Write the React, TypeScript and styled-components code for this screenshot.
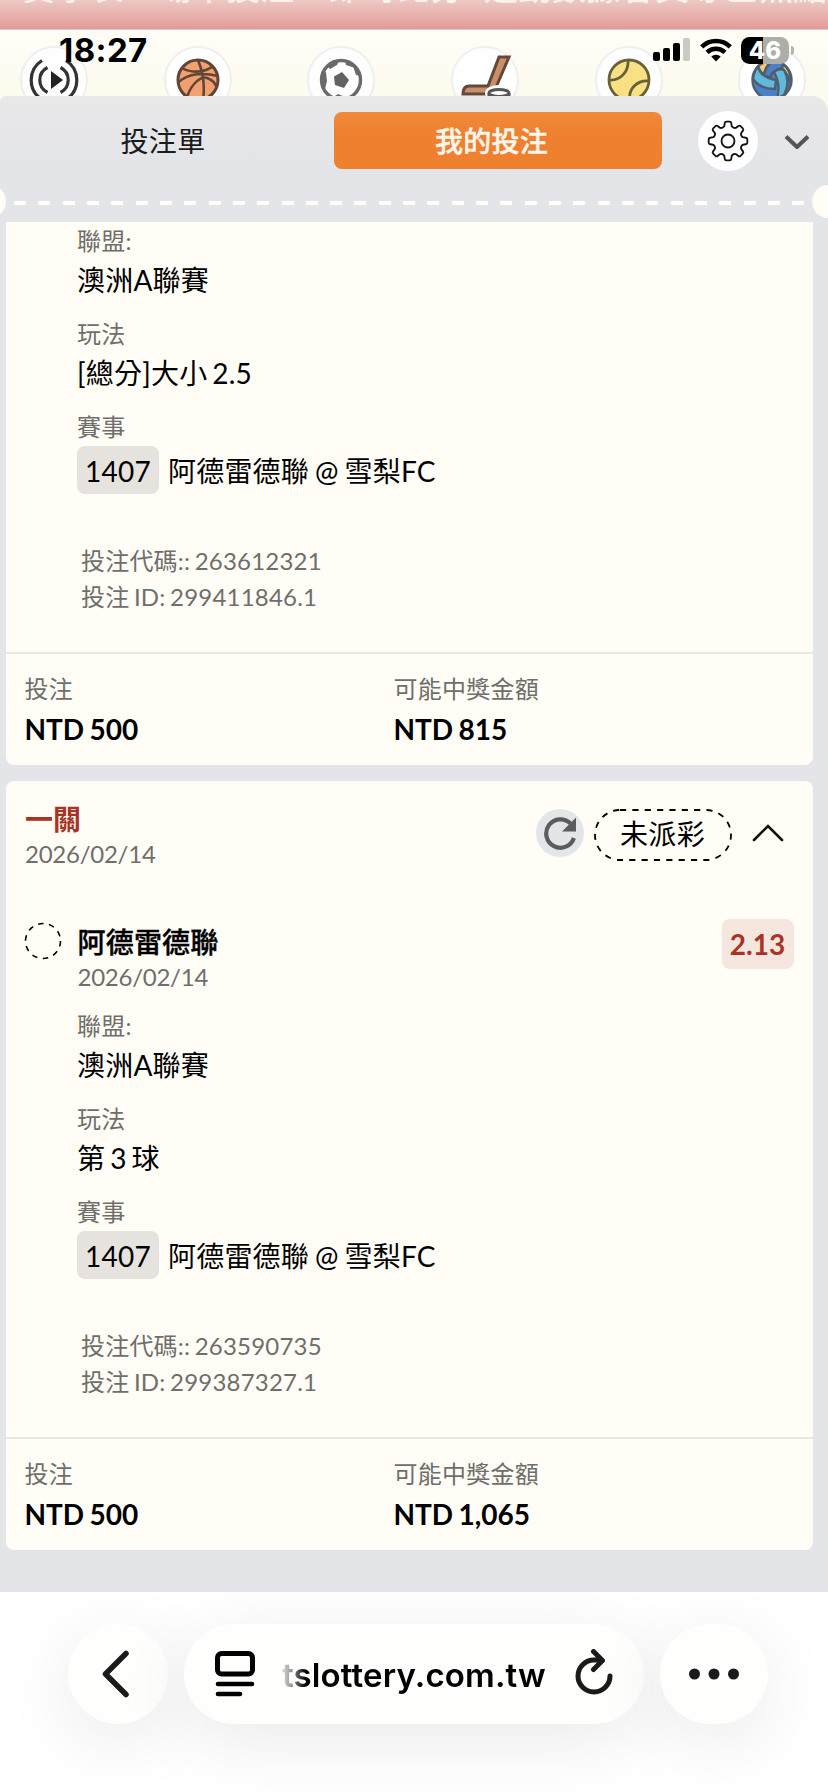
import React from "react";
import styled, { createGlobalStyle, css } from "styled-components";

const Global = createGlobalStyle`
  * { box-sizing: border-box; }
  html, body { margin: 0; padding: 0; }
  body {
    font-family: Lato, "Noto Sans CJK TC", sans-serif;
    background: #fff;
    color: #000;
  }
`;

const Screen = styled.div`
  position: relative;
  width: 828px;
  height: 1792px;
  overflow: hidden;
  display: flex;
  flex-direction: column;
`;

const NavStrip = styled.nav`
  height: 30px;
  flex: none;
  overflow: hidden;
  display: flex;
  align-items: flex-start;
  padding-left: 22px;
  background: linear-gradient(#edc9c3, #e39a97);
  border-bottom: 1px solid #eec4bd;
`;

const NavItem = styled.span<{ $w: number }>`
  width: ${(p) => p.$w}px;
  flex: none;
  margin-top: -33px;
  font-size: 34px;
  font-weight: 500;
  line-height: 40px;
  white-space: nowrap;
  color: #fdf3ea;
`;

const Sports = styled.div`
  height: 66px;
  flex: none;
  overflow: hidden;
  display: flex;
  gap: 75.7px;
  padding: 16px 0 0 20px;
  background: linear-gradient(#fffdf7, #fcfbee);
`;

const SportCircle = styled.div`
  width: 68px;
  height: 68px;
  flex: none;
  border-radius: 50%;
  border: 2px solid #f0efee;
  background: #fefefe;
  display: flex;
  align-items: center;
  justify-content: center;
`;

const StatusBar = styled.div`
  position: absolute;
  z-index: 2;
  left: 0;
  top: 30px;
  width: 828px;
  height: 40px;
  display: flex;
  align-items: center;
  justify-content: space-between;
  padding: 0 34px 0 59px;
`;

const Clock = styled.span`
  font: 700 33px/40px Inter, sans-serif;
  letter-spacing: 0.4px;
`;

const StatusIcons = styled.div`
  display: flex;
  align-items: center;
`;

const Bars = styled.svg`
  margin-right: 10px;
`;
const Wifi = styled.svg`
  margin-right: 9px;
`;

const Battery = styled.div`
  width: 48px;
  height: 27px;
  border-radius: 8.5px;
  background: linear-gradient(90deg, #000 22px, #adada9 22px);
  color: #fff;
  font: 800 24px/28px Inter, sans-serif;
  text-align: center;
`;
const BatteryTip = styled.span`
  width: 3px;
  height: 9px;
  margin-left: 2px;
  border-radius: 0 4px 4px 0;
  background: #b4b4b0;
`;

const Sheet = styled.main`
  height: 1496px;
  flex: none;
  display: flex;
  flex-direction: column;
  background: linear-gradient(#e8e8e9, #e4e5e8 70px);
  border-radius: 6px 16px 0 0;
`;

const SheetBack = styled.div`
  flex: none;
  height: 1496px;
  background: #fcfbee;
`;

const Tabs = styled.div`
  height: 88px;
  flex: none;
  display: flex;
  align-items: center;
  padding-top: 1px;
`;

const Tab = styled.div<{ $active?: boolean }>`
  height: 57px;
  width: 328px;
  display: flex;
  align-items: center;
  justify-content: center;
  font-size: 28px;
  letter-spacing: 0.3px;
  padding-bottom: 2px;
  border-radius: 8px;
  color: #1b1b1b;
  ${(p) =>
    p.$active
      ? css`
          background: linear-gradient(#f08a3a, #ee8030 40%);
          color: #fff6ec;
          font-weight: 500;
          padding-right: 13px;
          -webkit-text-stroke: 0.4px #fff6ec;
        `
      : css`
          padding-right: 2px;
          margin-right: 6px;
        `}
`;

const RoundButton = styled.div<{ $size: number; $bg: string }>`
  width: ${(p) => p.$size}px;
  height: ${(p) => p.$size}px;
  flex: none;
  border-radius: 50%;
  background: ${(p) => p.$bg};
  display: flex;
  align-items: center;
  justify-content: center;
`;

const GearSlot = styled.div`
  margin: 0 26px 0 36px;
`;

const Perforation = styled.div`
  height: 38px;
  flex: none;
  display: flex;
  align-items: center;
  justify-content: space-between;
  overflow: hidden;
`;

const Notch = styled.span<{ $side: "left" | "right" }>`
  width: 33px;
  height: 33px;
  flex: none;
  border-radius: 50%;
  background: #fffdf6;
  margin-top: -3px;
  ${(p) => (p.$side === "left" ? "margin-left: -27px;" : "margin-right: -17px;")}
`;

const Dashes = styled.span`
  width: 790px;
  height: 4px;
  background: repeating-linear-gradient(90deg, #fffdf6 0 12px, transparent 12px 24.32px);
`;

const List = styled.div`
  flex: 1;
  min-height: 0;
  overflow: hidden;
  display: flex;
  flex-direction: column;
  gap: 16px;
  padding: 0 15.5px 0 6px;
`;

const Card = styled.section<{ $cut?: boolean }>`
  flex: none;
  background: #fffdf6;
  border-radius: ${(p) => (p.$cut ? "0 0 8px 8px" : "8px")};
  height: ${(p) => (p.$cut ? 543 : 769)}px;
  display: flex;
  flex-direction: column;
`;

const CardHead = styled.header`
  height: 122px;
  flex: none;
  display: flex;
  justify-content: space-between;
  padding: 20px 29px 0 19px;
`;

const HeadActions = styled.div`
  display: flex;
  align-items: center;
  height: 64px;
`;

const RoundName = styled.div`
  font-size: 28px;
  line-height: 36px;
  font-weight: 700;
  color: #a93325;
`;

const DateText = styled.div`
  font-size: 24px;
  line-height: 34px;
  letter-spacing: -0.25px;
  color: #6f6e6b;
`;

const Status = styled.div`
  position: relative;
  width: 138px;
  height: 52px;
  margin: 4px 20px 0 10px;
  padding-bottom: 4px;
  display: flex;
  align-items: center;
  justify-content: center;
  font-size: 28px;
  letter-spacing: 0.3px;
`;

const Outline = styled.svg`
  position: absolute;
  inset: 0;
`;

const Pick = styled.div`
  height: 104px;
  flex: none;
  display: flex;
  padding: 18.500px 19px 0 18px;
`;

const PickInfo = styled.div`
  flex: 1;
  padding-left: 15.500px;
`;

const Team = styled.div`
  font-size: 28px;
  line-height: 36px;
  font-weight: 500;
  letter-spacing: 0.2px;
  -webkit-text-stroke: 0.4px #000;
  padding-top: 2px;
`;

const Odds = styled.div`
  width: 72px;
  height: 50px;
  border-radius: 8px;
  margin-top: -2.500px;
  background: #f5e7df;
  color: #a93325;
  font-size: 28px;
  line-height: 51px;
  font-weight: 700;
  text-align: center;
`;

const Details = styled.div`
  padding: 3px 0 0 71px;
`;

const Label = styled.div`
  font-size: 24px;
  line-height: 32px;
  letter-spacing: 0.25px;
  color: #6f6e6b;
`;

const Value = styled.div`
  font-size: 28px;
  line-height: 46px;
  margin-bottom: 15.2px;
  letter-spacing: 0.2px;
  word-spacing: -2.4px;
  white-space: pre;
`;

const Match = styled.div`
  display: flex;
  align-items: center;
  height: 48px;
  margin-top: 3px;
  font-size: 28px;
  letter-spacing: 0.2px;
  word-spacing: -1.4px;
`;

const Code = styled.span`
  width: 82px;
  height: 48px;
  margin-right: 9px;
  border-radius: 8px;
  background: #e6e3de;
  text-align: center;
  line-height: 50px;
`;

const Ids = styled.div`
  padding: 48.500px 0 0 4px;
  font-size: 24px;
  line-height: 36.6px;
  letter-spacing: 0.2px;
  word-spacing: -1.8px;
  color: #6f6e6b;
`;

const Foot = styled.footer`
  height: 113px;
  margin-top: auto;
  border-top: 2px solid #e8e7e1;
  display: flex;
  padding: 19px 18.5px 0;
`;

const Amount = styled.div`
  width: 369px;
`;

const Money = styled.div`
  font-size: 28px;
  line-height: 44px;
  font-weight: 700;
  word-spacing: -1.4px;
  padding-top: 2px;
`;

const BrowserBar = styled.footer`
  height: 200px;
  flex: none;
  display: flex;
  gap: 16px;
  padding: 32px 60px 0 68px;
  background: #fff;
  overflow: hidden;
`;

const Pill = styled.div<{ $w: number }>`
  width: ${(p) => p.$w}px;
  height: 100px;
  flex: none;
  border-radius: 50px;
  background: #fefefd;
  box-shadow: 0 16px 72px rgba(0, 0, 0, 0.085);
  display: flex;
  align-items: center;
  justify-content: center;
`;

const BackIcon = styled.svg`
  margin-right: 4px;
`;

const Url = styled.span`
  width: 268px;
  margin: 2px 25px 0 27px;
  font: 600 33px/40px Inter, sans-serif;
  letter-spacing: 0.15px;
  white-space: nowrap;
  background: linear-gradient(90deg, #ddd 0, #999 9px, #000 24px);
  -webkit-background-clip: text;
  background-clip: text;
  color: transparent;
`;

const ReloadPage = styled.svg`
  margin-bottom: 5px;
`;

const LiveIcon = () => (
  <svg width="50" height="50" viewBox="-25 -25 50 50" fill="none" stroke="#333" strokeWidth="3.2">
    <path d="M-12 -19.5A23 23 0 0 0 -12 19.5M12 -19.5A23 23 0 0 1 12 19.5" />
    <path d="M-6.5 -12.5A14 14 0 0 0 -6.5 12.5M6.5 -12.5A14 14 0 0 1 6.5 12.5" />
    <path d="M-3 -9L9 0L-3 9Z" fill="#222" stroke="none" />
  </svg>
);

const BasketballIcon = () => (
  <svg width="44" height="44" viewBox="-22 -22 44 44" fill="none" stroke="#5f4636" strokeWidth="2.6">
    <circle r="20" fill="#f3a071" strokeWidth="3" />
    <path d="M0 -20C5 -8 7 6 5 20M-16 -12C-6 -6 8 -8 15 -14M-20 3C-10 -8 8 -7 20 -4M-11 17C-6 2 4 -4 9 -2C15 0 18 5 19 8" />
  </svg>
);

const SoccerIcon = () => (
  <svg width="44" height="44" viewBox="-22 -22 44 44">
    <circle r="19.5" fill="#fff" stroke="#6a6a6a" strokeWidth="3.4" />
    <path d="M-7 -3.500L1 -8L8 0L3 8L-6 5Z" fill="#626262" />
    <path d="M4 -20Q17 -17 20 -4L15 -5L12.500 -12.500L5 -15ZM-20 -6L-15 -8L-14 1L-16 9L-20 6ZM-14 -14L-6 -20L-2 -19L-4 -15L-11 -11ZM-9 18L-3 14L4 17L2 20L-6 20ZM20 4L16 8L13 14L16 14Z" fill="#6a6a6a" />
  </svg>
);

const HockeyIcon = () => (
  <svg width="56" height="56" viewBox="-28 -28 56 56" stroke="#63493b" strokeWidth="3">
    <path d="M14 -23H24L12 5Q8 14 0 14H-22Q-22 6 -16 6H3Z" fill="#c98f68" />
    <ellipse cx="14" cy="13" rx="14" ry="8" fill="#fff" stroke="none" />
    <path d="M4 13V20H24V13" fill="none" stroke="#555" />
    <ellipse cx="14" cy="13" rx="10" ry="3.5" fill="#fff" stroke="#555" />
  </svg>
);

const TennisIcon = () => (
  <svg width="44" height="44" viewBox="-22 -22 44 44" fill="none" stroke="#67613a" strokeWidth="2.8">
    <circle r="20" fill="#f8e083" />
    <path d="M-20 0C-9 1 0 -8 -1 -20M20 1C8 0 -1 9 1 20" />
  </svg>
);

const VolleyballIcon = () => (
  <svg width="44" height="44" viewBox="-22 -22 44 44" strokeLinejoin="round" fill="none" stroke="#4f5f6c" strokeWidth="2.4">
    <circle r="19.5" fill="#4a7fc9" />
    <path d="M-14 -13.500Q-8 -19 0 -19.500Q-7 -13 -8 -5Q-12 -8 -14 -13.500Z" fill="#f6ca73" />
    <path d="M11 -16Q20 -9 19 5Q17 -5 10 -12Z" fill="#f6ca73" />
    <path d="M-8 -5Q-6 -14 1 -19.500Q7 -19 11 -16L10 -12Q0 -10 -2 -2Z" fill="#4a7fc9" />
    <path d="M-14 -13.500Q-12 -3 4 0L3 9Q-12 9 -19 -1Q-18 -9 -14 -13.500Z" fill="#62b9de" />
    <path d="M2 -8Q7 -12 12 -10Q19 2 12 15L5 18.500Q9 4 2 -8Z" fill="#62b9de" />
  </svg>
);

const gearPath = (() => {
  const pts: string[] = [];
  const n = 8;
  for (let i = 0; i < n; i++) {
    const c = (i * 2 * Math.PI) / n - Math.PI / 2;
    const p = (r: number, o: number) =>
      `${(r * Math.cos(c + o)).toFixed(2)} ${(r * Math.sin(c + o)).toFixed(2)}`;
    pts.push(
      `${i === 0 ? "M" : "L"}${p(15.2, -0.25)}Q${p(16.2, -0.22)} ${p(18.2, -0.18)}Q${p(19.6, -0.16)} ${p(19.4, -0.08)}L${p(19.4, 0.08)}Q${p(19.6, 0.16)} ${p(18.2, 0.18)}Q${p(16.2, 0.22)} ${p(15.2, 0.25)}Q${p(13.6, 0.393)} ${p(15.2, 0.535)}`
    );
  }
  return pts.join("") + "Z";
})();

const GearIcon = () => (
  <svg width="44" height="44" viewBox="-22 -22 44 44" fill="none" stroke="#111" strokeWidth="1.8" strokeLinejoin="round">
    <path d={gearPath} />
    <circle r="6.5" />
  </svg>
);

const ReloadBet = () => (
  <svg width="34" height="34" viewBox="-17 -17 34 34">
    <path d="M13.9 5A14.2 14.2 0 1 1 10.5 -9.5" fill="none" stroke="#5b5c5e" strokeWidth="4.2" />
    <path d="M16 -15.5V-1.5H2Z" fill="#5b5c5e" />
  </svg>
);

const sports = [LiveIcon, BasketballIcon, SoccerIcon, HockeyIcon, TennisIcon, VolleyballIcon];

const nav: [string, number][] = [
  ["賽事表", 136],
  ["場中投注", 170],
  ["即時比分", 156],
  ["運動數據", 137],
  ["會員專區", 138],
  ["焦點", 68],
];

interface BetProps {
  play: string;
  code: string;
  id: string;
  win: string;
  cut?: boolean;
}

const Bet = ({ play, code, id, win, cut }: BetProps) => (
  <Card $cut={cut}>
    {!cut && (
      <>
        <CardHead>
          <div>
            <RoundName>一關</RoundName>
            <DateText>2026/02/14</DateText>
          </div>
          <HeadActions>
            <RoundButton $size={48} $bg="#e4e5e9">
              <ReloadBet />
            </RoundButton>
            <Status>
              <Outline width="138" height="52">
                <rect x="1" y="1" width="136" height="50" rx="25" fill="none" stroke="#000" strokeWidth="1.8" strokeDasharray="6.2 6.15" />
              </Outline>
              未派彩
            </Status>
            <svg width="32" height="18" viewBox="0 0 32 18" fill="none" stroke="#111" strokeWidth="2.6" strokeLinecap="round">
              <path d="M2 16L16 2L30 16" />
            </svg>
          </HeadActions>
        </CardHead>
        <Pick>
          <svg width="38" height="38" viewBox="-19 -19 38 38">
            <circle r="17.5" fill="none" stroke="#000" strokeWidth="1.6" strokeDasharray="5.5 5.5" />
          </svg>
          <PickInfo>
            <Team>阿德雷德聯</Team>
            <DateText>2026/02/14</DateText>
          </PickInfo>
          <Odds>2.13</Odds>
        </Pick>
      </>
    )}
    <Details>
      <Label>聯盟:</Label>
      <Value>澳洲A聯賽</Value>
      <Label>玩法</Label>
      <Value>{play}</Value>
      <Label>賽事</Label>
      <Match>
        <Code>1407</Code>阿德雷德聯 @ 雪梨FC
      </Match>
      <Ids>
        <div>投注代碼:: {code}</div>
        <div>投注 ID: {id}</div>
      </Ids>
    </Details>
    <Foot>
      <Amount>
        <Label>投注</Label>
        <Money>NTD 500</Money>
      </Amount>
      <Amount>
        <Label>可能中獎金額</Label>
        <Money>NTD {win}</Money>
      </Amount>
    </Foot>
  </Card>
);

export default function App() {
  return (
    <Screen>
      <Global />
      <StatusBar>
        <Clock>18:27</Clock>
        <StatusIcons>
          <Bars width="37" height="24">
            <rect x="0" y="14" width="7" height="9" rx="2" />
            <rect x="10" y="10" width="7" height="13" rx="2" />
            <rect x="20" y="5" width="7" height="18" rx="2" />
            <rect x="30" y="0" width="7" height="23" rx="2" fill="#cacac5" />
          </Bars>
          <Wifi width="32" height="24" viewBox="0 0 32 24" fill="none" stroke="#000" strokeWidth="4.6">
            <path d="M1.7 8.8A20.5 20.5 0 0 1 30.3 8.8" />
            <path d="M7 14.3A13 13 0 0 1 25 14.3" />
            <path d="M16 23.5L11.3 18.6A6.8 6.8 0 0 1 20.7 18.6Z" fill="#000" stroke="none" />
          </Wifi>
          <Battery>46</Battery>
          <BatteryTip />
        </StatusIcons>
      </StatusBar>
      <NavStrip>
        {nav.map(([t, w]) => (
          <NavItem key={t} $w={w}>
            {t}
          </NavItem>
        ))}
      </NavStrip>
      <Sports>
        {sports.map((Icon, i) => (
          <SportCircle key={i}>
            <Icon />
          </SportCircle>
        ))}
      </Sports>
      <SheetBack>
        <Sheet>
          <Tabs>
            <Tab>投注單</Tab>
            <Tab $active>我的投注</Tab>
            <GearSlot>
              <RoundButton $size={60} $bg="#fff">
                <GearIcon />
              </RoundButton>
            </GearSlot>
            <svg width="26" height="18" viewBox="0 -2 26 18" fill="none" stroke="#555" strokeWidth="4" strokeLinejoin="round">
              <path d="M2 2.5L13 13L24 2.5" />
            </svg>
          </Tabs>
          <Perforation>
            <Notch $side="left" />
            <Dashes />
            <Notch $side="right" />
          </Perforation>
          <List>
            <Bet cut play="[總分]大小 2.5" code="263612321" id="299411846.1" win="815" />
            <Bet play="第 3 球" code="263590735" id="299387327.1" win="1,065" />
          </List>
        </Sheet>
      </SheetBack>
      <BrowserBar>
        <Pill $w={100}>
          <BackIcon width="28" height="48" viewBox="0 0 28 48" fill="none" stroke="#1a1a1a" strokeWidth="5.5" strokeLinecap="round" strokeLinejoin="round">
            <path d="M24 3.500L3.500 24L24 44.500" />
          </BackIcon>
        </Pill>
        <Pill $w={460}>
          <svg width="40" height="46" viewBox="0 0 40 46" fill="none" stroke="#000" strokeWidth="5" strokeLinecap="round">
            <rect x="2.5" y="2.5" width="35" height="20.5" rx="4" />
            <path d="M3 33H37M3 43H25" strokeWidth="4.6" />
          </svg>
          <Url>tslottery.com.tw</Url>
          <ReloadPage width="38" height="46" viewBox="0 0 38 46" fill="none" stroke="#1a1a1a" strokeWidth="5" strokeLinecap="round" strokeLinejoin="round">
            <path d="M35 27A16 16 0 1 1 19 11H27M18.5 2.5L27.5 11.5L18.5 20.5" />
          </ReloadPage>
        </Pill>
        <Pill $w={108}>
          <svg width="50" height="12" fill="#1a1a1a">
            <circle cx="5.5" cy="6" r="5.5" />
            <circle cx="25" cy="6" r="5.5" />
            <circle cx="44.5" cy="6" r="5.5" />
          </svg>
        </Pill>
      </BrowserBar>
    </Screen>
  );
}
